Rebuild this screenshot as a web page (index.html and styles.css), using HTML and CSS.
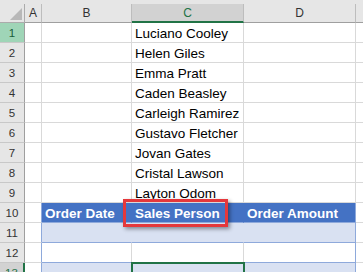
FILE: index.html
```html
<!DOCTYPE html>
<html lang="en">
<head>
    <meta charset="UTF-8">
    <meta name="viewport" content="width=device-width, initial-scale=1.0">
    <title>Sales Table</title>
    <link rel="stylesheet" href="styles.css">
</head>
<body>
    <div class="sheet">
        <div class="strip"></div>

        <!-- column headers -->
        <div class="corner"></div>
        <div class="colhead">A</div>
        <div class="colhead">B</div>
        <div class="colhead sel">C</div>
        <div class="colhead">D</div>
        <div class="colhead end"></div>

        <div class="rowhead hl">1</div><div class="cell"></div><div class="cell"></div><div class="cell">Luciano Cooley</div><div class="cell"></div><div class="cell end"></div>
        <div class="rowhead">2</div><div class="cell"></div><div class="cell"></div><div class="cell">Helen Giles</div><div class="cell"></div><div class="cell end"></div>
        <div class="rowhead">3</div><div class="cell"></div><div class="cell"></div><div class="cell">Emma Pratt</div><div class="cell"></div><div class="cell end"></div>
        <div class="rowhead">4</div><div class="cell"></div><div class="cell"></div><div class="cell">Caden Beasley</div><div class="cell"></div><div class="cell end"></div>
        <div class="rowhead">5</div><div class="cell"></div><div class="cell"></div><div class="cell">Carleigh Ramirez</div><div class="cell"></div><div class="cell end"></div>
        <div class="rowhead">6</div><div class="cell"></div><div class="cell"></div><div class="cell">Gustavo Fletcher</div><div class="cell"></div><div class="cell end"></div>
        <div class="rowhead">7</div><div class="cell"></div><div class="cell"></div><div class="cell">Jovan Gates</div><div class="cell"></div><div class="cell end"></div>
        <div class="rowhead">8</div><div class="cell"></div><div class="cell"></div><div class="cell">Cristal Lawson</div><div class="cell"></div><div class="cell end"></div>
        <div class="rowhead">9</div><div class="cell"></div><div class="cell"></div><div class="cell">Layton Odom</div><div class="cell"></div><div class="cell end"></div>

        <!-- table -->
        <div class="rowhead">10</div><div class="cell tleft"></div><div class="cell th">Order Date</div><div class="cell th">Sales Person</div><div class="cell th tend">Order Amount</div><div class="cell end"></div>
        <div class="rowhead">11</div><div class="cell tleft"></div><div class="cell band"></div><div class="cell band"></div><div class="cell band tend"></div><div class="cell end"></div>
        <div class="rowhead">12</div><div class="cell tleft"></div><div class="cell plain"></div><div class="cell plain"></div><div class="cell plain tend"></div><div class="cell end"></div>
        <div class="rowhead act">13</div><div class="cell tleft"></div><div class="cell band"></div><div class="cell band active"></div><div class="cell band tend"></div><div class="cell end"></div>

        <div class="callout"></div>
    </div>
</body>
</html>
```

FILE: styles.css
```css
body {
    margin: 0;
    font-family: "Liberation Sans", Arial, sans-serif;
    background: #fff;
    overflow: hidden;
}
.sheet {
    position: relative;
    display: grid;
    grid-template-columns: 25px 17px 90px 112px 112px 1fr;
    grid-template-rows: 4px 19px repeat(13, 20px);
}
.sheet > div {
    box-sizing: border-box;
}
.strip {
    grid-column: 1 / -1;
    background: #e6e6e6;
}
.corner {
    position: relative;
    background: #e6e6e6;
    border-right: 1px solid #ababab;
    border-bottom: 1px solid #ababab;
}
.corner::after {
    content: "";
    position: absolute;
    right: 2px;
    bottom: 2px;
    border-left: 12px solid transparent;
    border-bottom: 12px solid #b8b8b8;
}
.colhead {
    display: flex;
    align-items: center;
    justify-content: center;
    background: #e6e6e6;
    border-right: 1px solid #bdbdbd;
    border-bottom: 1px solid #9f9f9f;
    font-size: 12px;
    color: #333;
}
.colhead.sel {
    background: #d2d2d2;
    border-bottom: 2px solid #217346;
    color: #217346;
}
.colhead.end {
    border-right: none;
}
.rowhead {
    display: flex;
    align-items: center;
    justify-content: center;
    background: #e6e6e6;
    border-right: 1px solid #9f9f9f;
    border-bottom: 1px solid #c8c8c8;
    font-size: 11.5px;
    color: #333;
}
.rowhead.hl {
    background: #9fd5b7;
    color: #185c37;
}
.rowhead.act {
    background: #d2d2d2;
    border-right: 2px solid #217346;
    color: #217346;
}
.cell {
    display: flex;
    align-items: flex-end;
    padding: 0 3px;
    border-right: 1px solid #d9d9d9;
    border-bottom: 1px solid #d9d9d9;
    font-size: 13.5px;
    line-height: 16px;
    white-space: nowrap;
    color: #000;
}
.cell.end {
    border-right: none;
}
.tleft {
    border-right-color: #8ea9db;
}
.th {
    background: #4472c4;
    color: #fff;
    font-weight: bold;
    border-right-color: #4472c4;
    border-bottom-color: #8ea9db;
}
.band {
    background: #d9e1f2;
    border-right-color: #d9e1f2;
    border-bottom-color: #8ea9db;
}
.plain {
    border-bottom-color: #8ea9db;
}
.tend {
    border-right-color: #8ea9db;
}
.active {
    position: relative;
    z-index: 1;
    outline: 2px solid #217346;
    outline-offset: -1px;
}
.callout {
    position: absolute;
    left: 123px;
    top: 199px;
    width: 105px;
    height: 28px;
    border: 3px solid #e5383b;
    box-shadow: 2px 2px 4px rgba(0, 0, 0, 0.4);
    z-index: 2;
}
```
